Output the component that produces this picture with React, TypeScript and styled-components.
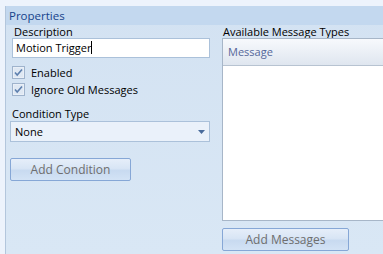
import { createGlobalStyle } from "styled-components";
import styled from "styled-components";

const GlobalStyle = createGlobalStyle`
  html, body {
    margin: 0;
    padding: 0;
    background: #edf3fc;
    font-family: "Open Sans", "Liberation Sans", sans-serif;
    font-size: 11px;
  }
`;

const Frame = styled.div`
  width: 383px;
  height: 254px;
  padding: 6px 0 0 5px;
  box-sizing: border-box;
  overflow: hidden;
`;

const Panel = styled.div`
  height: 100%;
  border-left: 1px solid #b3c6dc;
  background: linear-gradient(#d3e2f2, #d9e7f5);
  display: flex;
  flex-direction: column;
`;

const PanelHeader = styled.div`
  height: 19px;
  line-height: 19px;
  padding-left: 3px;
  background: #c3d8ef;
  color: #15428b;
  font-size: 11.5px;
`;

const PanelBody = styled.div`
  flex: 1;
  display: grid;
  grid-template-columns: 216px 1fr;
`;

const Column = styled.div`
  display: flex;
  flex-direction: column;
`;

const Spacer = styled.div<{ $h: number }>`
  height: ${(p) => p.$h}px;
  flex: none;
`;

const Label = styled.div<{ $indent?: number }>`
  color: #000;
  height: 13px;
  line-height: 13px;
  padding-left: ${(p) => p.$indent ?? 0}px;
  white-space: nowrap;
`;

const TextInput = styled.div`
  margin: 0 12px 0 6px;
  height: 20px;
  box-sizing: border-box;
  border: 1px solid #abc1da;
  background: #fff;
  padding-left: 3px;
  line-height: 18px;
  color: #000;
`;

const Caret = styled.span`
  display: inline-block;
  width: 1px;
  height: 13px;
  background: #000;
  vertical-align: -2px;
`;

const CheckRow = styled.div`
  display: flex;
  align-items: center;
  gap: 6px;
  height: 17px;
  padding-left: 6px;
`;

const Combo = styled.div`
  margin: 0 12px 0 4px;
  height: 21px;
  box-sizing: border-box;
  border: 1px solid #abc1da;
  background: #eaf1fa;
  display: flex;
  align-items: center;
  justify-content: space-between;
  padding: 0 4px 0 4px;
`;

const ButtonRow = styled.div<{ $top: number; $left: number }>`
  margin-top: ${(p) => p.$top}px;
  padding-left: ${(p) => p.$left}px;
`;

const Button = styled.div<{ $width: number }>`
  width: ${(p) => p.$width}px;
  height: 23px;
  box-sizing: border-box;
  border: 1px solid #86a7d6;
  border-radius: 2px;
  background: linear-gradient(#e6eef9 0%, #d8e5f5 45%, #c8daf0 55%, #d3e3f5 100%);
  color: #6e6e6e;
  display: flex;
  align-items: center;
  justify-content: center;
  font-size: 12px;
`;

const ListBox = styled.div`
  height: 183px;
  box-sizing: border-box;
  border: 1px solid #a7b6c8;
  border-right: none;
  background: #fff;
`;

const ListHeader = styled.div`
  height: 27px;
  box-sizing: border-box;
  border-bottom: 1px solid #b7c3d1;
  background: linear-gradient(#f7f9fc, #dfe6ef);
  color: #56679a;
  padding-left: 5px;
  line-height: 26px;
  font-size: 11px;
`;

function CheckBox() {
  return (
    <svg width="13" height="13" viewBox="0 0 13 13">
      <rect x="0.5" y="0.5" width="12" height="12" fill="#e9eff7" stroke="#9fb3cc" />
      <rect x="2" y="2" width="9" height="9" fill="#dfe8f3" />
      <path d="M3 6.5 L5.2 9 L10 3.5" fill="none" stroke="#5d7fae" strokeWidth="1.6" />
    </svg>
  );
}

function App() {
  return (
    <>
      <GlobalStyle />
      <Frame>
        <Panel>
          <PanelHeader>Properties</PanelHeader>
          <PanelBody>
            <Column>
              <Label $indent={8}>Description</Label>
              <TextInput>
                Motion Trigger
                <Caret />
              </TextInput>
              <Spacer $h={6} />
              <CheckRow>
                <CheckBox />
                <span>Enabled</span>
              </CheckRow>
              <CheckRow>
                <CheckBox />
                <span>Ignore Old Messages</span>
              </CheckRow>
              <Spacer $h={9} />
              <Label $indent={6}>Condition Type</Label>
              <Spacer $h={1} />
              <Combo>
                <span>None</span>
                <svg width="7" height="4" viewBox="0 0 7 4">
                  <path d="M0 0 H7 L3.5 4 Z" fill="#4a6b9b" />
                </svg>
              </Combo>
              <ButtonRow $top={16} $left={4}>
                <Button $width={121}>Add Condition</Button>
              </ButtonRow>
            </Column>
            <Column>
              <Label $indent={1}>Available Message Types</Label>
              <ListBox>
                <ListHeader>Message</ListHeader>
              </ListBox>
              <ButtonRow $top={7} $left={0}>
                <Button $width={127}>Add Messages</Button>
              </ButtonRow>
            </Column>
          </PanelBody>
        </Panel>
      </Frame>
    </>
  );
}

export default App;
